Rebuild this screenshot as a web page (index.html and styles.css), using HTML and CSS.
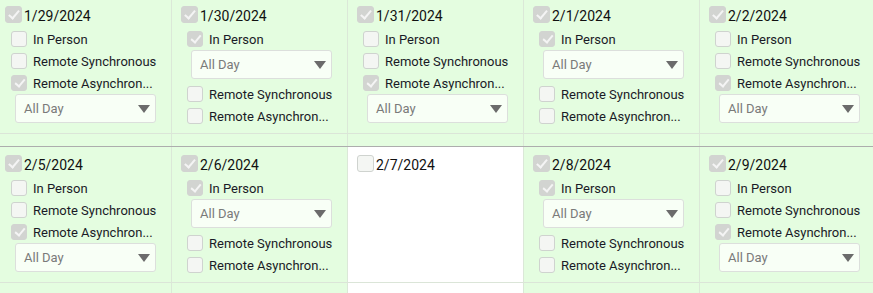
FILE: index.html
```html
<!DOCTYPE html>
<html>
<head>
<meta charset="utf-8">
<link rel="stylesheet" href="styles.css">
</head>
<body>
<div class="calendar">
  <div class="week">
    <div class="day">
      <div class="head"><span class="cb on"></span><span class="date">1/29/2024</span></div>
      <div class="opt"><span class="cb sm"></span><span class="lbl">In Person</span></div>
      <div class="opt"><span class="cb sm"></span><span class="lbl">Remote Synchronous</span></div>
      <div class="opt"><span class="cb sm on"></span><span class="lbl">Remote Asynchron...</span></div>
      <div class="sel"><span>All Day</span><span class="arrow"></span></div>
    </div>
    <div class="day">
      <div class="head"><span class="cb on"></span><span class="date">1/30/2024</span></div>
      <div class="opt"><span class="cb sm on"></span><span class="lbl">In Person</span></div>
      <div class="sel"><span>All Day</span><span class="arrow"></span></div>
      <div class="opt"><span class="cb sm"></span><span class="lbl">Remote Synchronous</span></div>
      <div class="opt"><span class="cb sm"></span><span class="lbl">Remote Asynchron...</span></div>
    </div>
    <div class="day">
      <div class="head"><span class="cb on"></span><span class="date">1/31/2024</span></div>
      <div class="opt"><span class="cb sm"></span><span class="lbl">In Person</span></div>
      <div class="opt"><span class="cb sm"></span><span class="lbl">Remote Synchronous</span></div>
      <div class="opt"><span class="cb sm on"></span><span class="lbl">Remote Asynchron...</span></div>
      <div class="sel"><span>All Day</span><span class="arrow"></span></div>
    </div>
    <div class="day">
      <div class="head"><span class="cb on"></span><span class="date">2/1/2024</span></div>
      <div class="opt"><span class="cb sm on"></span><span class="lbl">In Person</span></div>
      <div class="sel"><span>All Day</span><span class="arrow"></span></div>
      <div class="opt"><span class="cb sm"></span><span class="lbl">Remote Synchronous</span></div>
      <div class="opt"><span class="cb sm"></span><span class="lbl">Remote Asynchron...</span></div>
    </div>
    <div class="day">
      <div class="head"><span class="cb on"></span><span class="date">2/2/2024</span></div>
      <div class="opt"><span class="cb sm"></span><span class="lbl">In Person</span></div>
      <div class="opt"><span class="cb sm"></span><span class="lbl">Remote Synchronous</span></div>
      <div class="opt"><span class="cb sm on"></span><span class="lbl">Remote Asynchron...</span></div>
      <div class="sel"><span>All Day</span><span class="arrow"></span></div>
    </div>
    <div class="foot"></div><div class="foot"></div><div class="foot"></div><div class="foot"></div><div class="foot"></div>
  </div>
  <div class="week">
    <div class="day">
      <div class="head"><span class="cb on"></span><span class="date">2/5/2024</span></div>
      <div class="opt"><span class="cb sm"></span><span class="lbl">In Person</span></div>
      <div class="opt"><span class="cb sm"></span><span class="lbl">Remote Synchronous</span></div>
      <div class="opt"><span class="cb sm on"></span><span class="lbl">Remote Asynchron...</span></div>
      <div class="sel"><span>All Day</span><span class="arrow"></span></div>
    </div>
    <div class="day">
      <div class="head"><span class="cb on"></span><span class="date">2/6/2024</span></div>
      <div class="opt"><span class="cb sm on"></span><span class="lbl">In Person</span></div>
      <div class="sel"><span>All Day</span><span class="arrow"></span></div>
      <div class="opt"><span class="cb sm"></span><span class="lbl">Remote Synchronous</span></div>
      <div class="opt"><span class="cb sm"></span><span class="lbl">Remote Asynchron...</span></div>
    </div>
    <div class="day off">
      <div class="head"><span class="cb"></span><span class="date">2/7/2024</span></div>
    </div>
    <div class="day">
      <div class="head"><span class="cb on"></span><span class="date">2/8/2024</span></div>
      <div class="opt"><span class="cb sm on"></span><span class="lbl">In Person</span></div>
      <div class="sel"><span>All Day</span><span class="arrow"></span></div>
      <div class="opt"><span class="cb sm"></span><span class="lbl">Remote Synchronous</span></div>
      <div class="opt"><span class="cb sm"></span><span class="lbl">Remote Asynchron...</span></div>
    </div>
    <div class="day">
      <div class="head"><span class="cb on"></span><span class="date">2/9/2024</span></div>
      <div class="opt"><span class="cb sm"></span><span class="lbl">In Person</span></div>
      <div class="opt"><span class="cb sm"></span><span class="lbl">Remote Synchronous</span></div>
      <div class="opt"><span class="cb sm on"></span><span class="lbl">Remote Asynchron...</span></div>
      <div class="sel"><span>All Day</span><span class="arrow"></span></div>
    </div>
    <div class="foot"></div><div class="foot"></div><div class="foot off"></div><div class="foot"></div><div class="foot"></div>
  </div>
</div>
</body>
</html>
```
FILE: styles.css
```css
html, body {
  margin: 0;
  padding: 0;
  background: #ffffff;
  overflow: hidden;
}
body {
  font-family: Roboto, "Liberation Sans", sans-serif;
  font-size: 13px;
  color: #222;
}
.calendar {
  margin: -2px 0 0 -4px;
  width: 880px;
}
.week {
  display: grid;
  grid-template-columns: repeat(5, 176px);
  grid-template-rows: 136px 12px;
  border-bottom: 1px solid #adadad;
}
.day {
  background: #e4fde0;
  border-right: 1px solid #dbe8d8;
  border-bottom: 1px solid #dbe5d8;
  padding: 8px 0 0 9px;
  display: flex;
  flex-direction: column;
  align-items: flex-start;
}
.day.off {
  background: #ffffff;
}
.foot {
  background: #e4fde0;
  border-right: 1px solid #dbe8d8;
}
.foot.off {
  background: #ffffff;
}
.head {
  display: flex;
  align-items: center;
  height: 17px;
}
.date {
  color: #111;
  font-size: 14px;
  margin-left: 2px;
  line-height: 17px;
  padding-top: 3px;
}
.cb {
  width: 17px;
  height: 17px;
  box-sizing: border-box;
  border-radius: 3px;
  border: 1px solid #cfd3cf;
  background: #f4f6f3;
  position: relative;
  flex: none;
}
.cb.on {
  background: #d2d4d1;
  border-color: #d2d4d1;
}
.cb.on::after {
  content: "";
  position: absolute;
  left: 5px;
  top: 1px;
  width: 4px;
  height: 9px;
  border: solid #f4f4f4;
  border-width: 0 2px 2px 0;
  transform: rotate(40deg);
}
.cb.sm {
  width: 16px;
  height: 16px;
}
.cb.sm.on::after {
  left: 5px;
  top: 1px;
  width: 4px;
  height: 8px;
}
.opt {
  display: flex;
  align-items: center;
  height: 22px;
  margin-left: 6px;
}
.head + .opt {
  margin-top: 5px;
}
.lbl {
  margin-left: 6px;
  color: #1a1a26;
  white-space: nowrap;
  padding-top: 1px;
}
.sel {
  margin: 0 0 4px 10px;
  width: 141px;
  height: 29px;
  box-sizing: border-box;
  border: 1px solid #dcdfdc;
  border-radius: 3px;
  background: #f8fff6;
  display: flex;
  align-items: center;
  justify-content: space-between;
  padding: 0 5px 0 8px;
  color: #7a7a7a;
}
.arrow {
  width: 0;
  height: 0;
  border-left: 6px solid transparent;
  border-right: 6px solid transparent;
  border-top: 8px solid #6b6b6b;
}
```
